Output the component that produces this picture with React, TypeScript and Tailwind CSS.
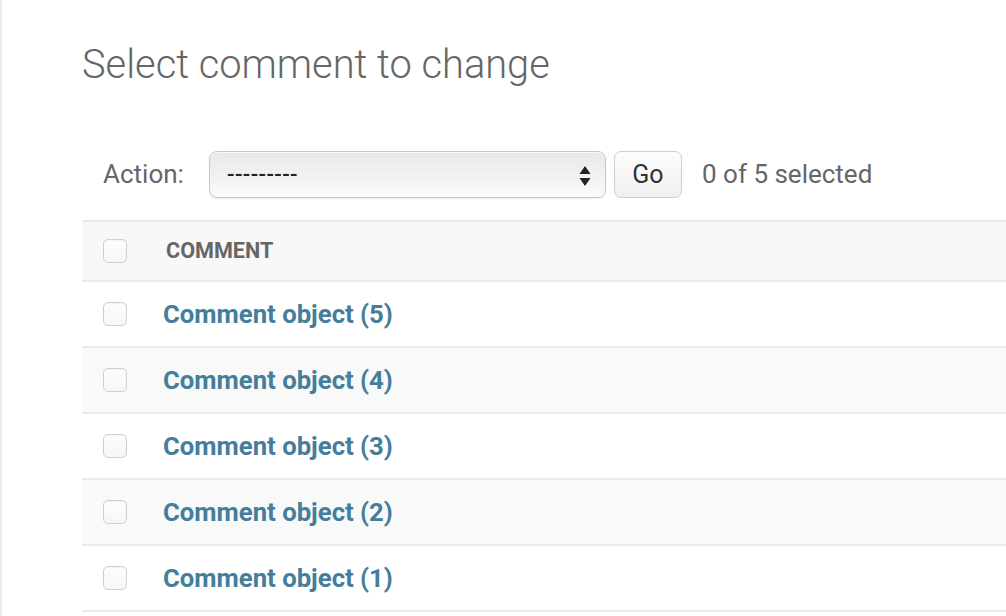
import React from "react";

const rows = [5, 4, 3, 2, 1];

function Checkbox() {
    return (
        <span className="block w-[24px] h-[24px] rounded-[5px] border border-[#cfcfcf] bg-gradient-to-b from-[#fdfdfd] to-[#f6f6f6] shadow-[inset_0_1px_1px_rgba(0,0,0,0.04)]" />
    );
}

export default function App() {
    return (
        <div className="w-[1006px] h-[616px] overflow-hidden bg-white border-l-2 border-[#ececec] pl-[80px] font-['Roboto',sans-serif]">
            <div className="h-[151px] flex flex-col">
                <h1 className="pt-[41px] text-[39.8px] leading-[48px] font-light text-[#666]">
                    Select comment to change
                </h1>
            </div>

            <div className="h-[47px] flex items-center pl-[21px]">
                <span className="text-[26px] text-[#666] w-[106px]">Action:</span>
                <div className="relative w-[397px] h-[47px] rounded-[8px] border border-[#c8c8c8] bg-gradient-to-b from-[#e9e9e9] via-[#f1f1f1] to-[#fbfbfb] shadow-[inset_0_1px_0_rgba(255,255,255,0.8),0_1px_1px_rgba(0,0,0,0.08)] flex items-center pl-[17px]">
                    <span className="text-[22px] font-medium text-[#222] tracking-[0.4px]">---------</span>
                    <svg className="absolute right-[13px] top-[12px]" width="14" height="24" viewBox="0 0 14 24">
                        <path d="M7 2 L12.5 10 H1.5 Z" fill="#222" />
                        <path d="M7 22 L12.5 14 H1.5 Z" fill="#222" />
                    </svg>
                </div>
                <button className="ml-[8px] w-[68px] h-[47px] rounded-[7px] border border-[#cfcfcf] bg-gradient-to-b from-[#fdfdfd] to-[#f0f0f0] text-[25px] text-[#333] flex items-center justify-center">
                    Go
                </button>
                <span className="ml-[20px] text-[26px] text-[#666]">0 of 5 selected</span>
            </div>

            <div className="mt-[22px] w-[1000px]">
                <div className="h-[62px] bg-[#f8f8f8] border-t-2 border-b-2 border-[#eaeaea] flex items-center">
                    <div className="w-[81px] pl-[21px]">
                        <Checkbox />
                    </div>
                    <span className="pl-[3px] text-[21.6px] font-bold text-[#666]">COMMENT</span>
                </div>
                {rows.map((n, i) => (
                    <div
                        key={n}
                        className={`h-[66px] border-b-2 border-[#eaeaea] flex items-center ${i % 2 === 1 ? "bg-[#f9f9f9]" : "bg-white"}`}
                    >
                        <div className="w-[81px] pl-[21px]">
                            <Checkbox />
                        </div>
                        <a href="#" className="text-[25.7px] font-bold text-[#447e9b]">
                            Comment object ({n})
                        </a>
                    </div>
                ))}
            </div>
        </div>
    );
}
